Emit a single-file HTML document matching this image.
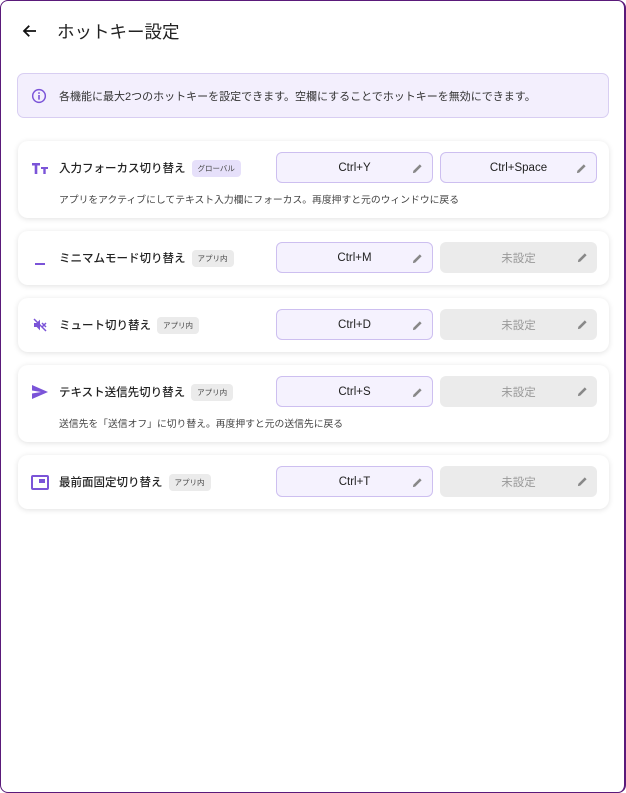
<!DOCTYPE html>
<html><head><meta charset="utf-8"><style>
*{box-sizing:border-box;margin:0;padding:0}
html,body{width:626px;height:793px;background:#fff;overflow:hidden}
body{font-family:"Liberation Sans","Noto Sans CJK JP",sans-serif;color:#222}
.win{position:absolute;left:0;top:0;width:626px;height:793px;border:1px solid #5a1a7a;border-right-width:2px;border-radius:8px;background:#fff}
.hdr{position:absolute;left:20px;top:16px;height:28px;display:flex;align-items:center}
.hdr h1{font-weight:400;font-size:17.5px;margin-left:18px;color:#222}
.info{position:absolute;left:16px;top:72px;width:592px;height:45px;background:#f3effd;border:1px solid #d8cef2;border-radius:7px;display:flex;align-items:center;padding-left:13px;font-size:11px;color:#333}
.info span{margin-left:12px}
.card{position:absolute;left:17px;width:591px;background:#fff;border-radius:10px;box-shadow:0 1px 6px rgba(0,0,0,.12)}
.ic{position:absolute;left:13px;width:18px;height:18px;display:flex;align-items:center;justify-content:center}
.t{position:absolute;left:41px;font-size:11.5px;font-weight:500;display:flex;align-items:center;color:#222;height:18px}
.tag{font-size:7.5px;background:#ebebeb;color:#444;border-radius:4px;padding:3px 6px;margin-left:6px;font-weight:400}
.tag.g{background:#e6e0fa}
.b{position:absolute;width:157px;height:31px;border-radius:6px;display:flex;align-items:center;justify-content:center;font-size:11.5px}
.b.s{background:#f5f2fe;border:1px solid #cdbff0;color:#222}
.b.e{background:#ebebeb;color:#999}
.b svg{position:absolute;right:9px;top:10px}
.d{position:absolute;left:41px;font-size:9.8px;color:#444}
</style></head><body><div class="win">
<div class="hdr"><svg width="18" height="18" viewBox="0 0 24 24"><path d="M20 12H5M11 5l-7 7 7 7" stroke="#111" stroke-width="2.4" fill="none"/></svg><h1>ホットキー設定</h1></div>
<div class="info"><svg width="16" height="16" viewBox="0 0 24 24"><circle cx="12" cy="12" r="9.5" stroke="#7b54d8" stroke-width="2.2" fill="none"/><rect x="10.8" y="10.5" width="2.4" height="7" fill="#7b54d8"/><circle cx="12" cy="7.5" r="1.4" fill="#7b54d8"/></svg><span>各機能に最大2つのホットキーを設定できます。空欄にすることでホットキーを無効にできます。</span></div>

<div class="card" style="top:140px;height:77px">
<div class="ic" style="top:18px"><svg width="18" height="14" viewBox="0 0 18 14"><path d="M1 2h8v2.5H6.3V13H3.7V4.5H1z M10 6h7v2h-2.3v5h-2.4V8H10z" fill="#7b54d8"/></svg></div>
<div class="t" style="top:18px">入力フォーカス切り替え<span class="tag g">グローバル</span></div>
<div class="b s" style="left:258px;top:11px">Ctrl+Y<svg width="11" height="11" viewBox="0 0 12 12"><path d="M1 11l.5-2.5L8.5 1.5l2 2-7 7z" fill="#888"/></svg></div>
<div class="b s" style="left:422px;top:11px">Ctrl+Space<svg width="11" height="11" viewBox="0 0 12 12"><path d="M1 11l.5-2.5L8.5 1.5l2 2-7 7z" fill="#888"/></svg></div>
<div class="d" style="top:51px">アプリをアクティブにしてテキスト入力欄にフォーカス。再度押すと元のウィンドウに戻る</div>
</div>

<div class="card" style="top:230px;height:54px">
<div class="ic" style="top:18px"><svg width="12" height="18" viewBox="0 0 12 18"><rect x="1" y="14" width="10" height="2" fill="#7b54d8"/></svg></div>
<div class="t" style="top:18px">ミニマムモード切り替え<span class="tag">アプリ内</span></div>
<div class="b s" style="left:258px;top:11px">Ctrl+M<svg width="11" height="11" viewBox="0 0 12 12"><path d="M1 11l.5-2.5L8.5 1.5l2 2-7 7z" fill="#888"/></svg></div>
<div class="b e" style="left:422px;top:11px">未設定<svg width="11" height="11" viewBox="0 0 12 12"><path d="M1 11l.5-2.5L8.5 1.5l2 2-7 7z" fill="#888"/></svg></div>
</div>

<div class="card" style="top:297px;height:54px">
<div class="ic" style="top:18px"><svg width="16" height="16" viewBox="0 0 24 24"><path d="M3 9h4l5-5v16l-5-5H3z" fill="#7b54d8"/><path d="M15 9l6 6M21 9l-6 6M3 3l18 18" stroke="#7b54d8" stroke-width="2.2"/></svg></div>
<div class="t" style="top:18px">ミュート切り替え<span class="tag">アプリ内</span></div>
<div class="b s" style="left:258px;top:11px">Ctrl+D<svg width="11" height="11" viewBox="0 0 12 12"><path d="M1 11l.5-2.5L8.5 1.5l2 2-7 7z" fill="#888"/></svg></div>
<div class="b e" style="left:422px;top:11px">未設定<svg width="11" height="11" viewBox="0 0 12 12"><path d="M1 11l.5-2.5L8.5 1.5l2 2-7 7z" fill="#888"/></svg></div>
</div>

<div class="card" style="top:364px;height:77px">
<div class="ic" style="top:18px"><svg width="16" height="14" viewBox="0 0 16 14"><path d="M0 0l16 7-16 7 0-5.5L9 7 0 5.5z" fill="#7b54d8"/></svg></div>
<div class="t" style="top:18px">テキスト送信先切り替え<span class="tag">アプリ内</span></div>
<div class="b s" style="left:258px;top:11px">Ctrl+S<svg width="11" height="11" viewBox="0 0 12 12"><path d="M1 11l.5-2.5L8.5 1.5l2 2-7 7z" fill="#888"/></svg></div>
<div class="b e" style="left:422px;top:11px">未設定<svg width="11" height="11" viewBox="0 0 12 12"><path d="M1 11l.5-2.5L8.5 1.5l2 2-7 7z" fill="#888"/></svg></div>
<div class="d" style="top:51px">送信先を「送信オフ」に切り替え。再度押すと元の送信先に戻る</div>
</div>

<div class="card" style="top:454px;height:54px">
<div class="ic" style="top:18px"><svg width="18" height="15" viewBox="0 0 18 15"><rect x="1" y="1" width="16" height="13" rx="1" stroke="#7b54d8" stroke-width="2" fill="none"/><rect x="8" y="4" width="6" height="4" fill="#7b54d8"/></svg></div>
<div class="t" style="top:18px">最前面固定切り替え<span class="tag">アプリ内</span></div>
<div class="b s" style="left:258px;top:11px">Ctrl+T<svg width="11" height="11" viewBox="0 0 12 12"><path d="M1 11l.5-2.5L8.5 1.5l2 2-7 7z" fill="#888"/></svg></div>
<div class="b e" style="left:422px;top:11px">未設定<svg width="11" height="11" viewBox="0 0 12 12"><path d="M1 11l.5-2.5L8.5 1.5l2 2-7 7z" fill="#888"/></svg></div>
</div>
</div></body></html>
